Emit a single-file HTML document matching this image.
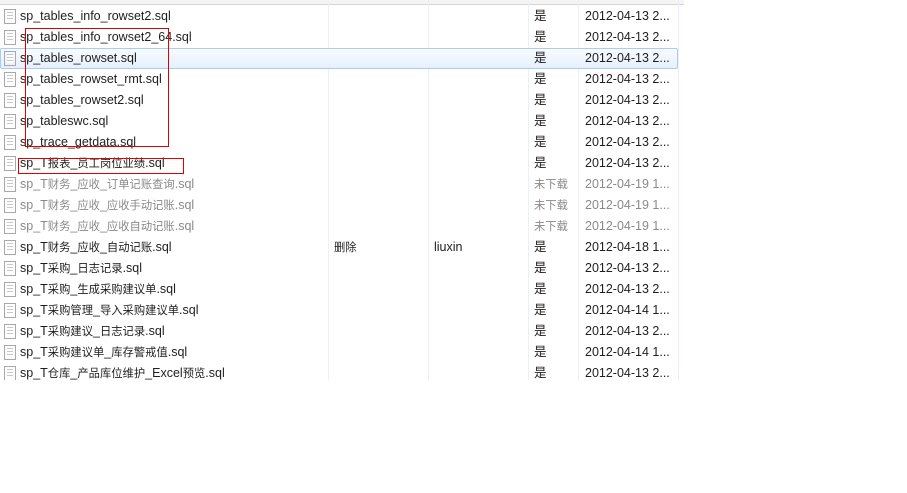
<!DOCTYPE html><html><head><meta charset="utf-8"><style>
body{margin:0;width:907px;height:493px;background:#fff;position:relative;overflow:hidden;font-family:"Liberation Sans","Noto Sans CJK SC",sans-serif;font-size:12.5px;color:#1e1e1e}
.wrap{position:absolute;left:0;top:0;width:684px;height:380px;overflow:hidden}
.hdr{position:absolute;left:0;top:0;width:684px;height:4px;border-bottom:1px solid #d5d5d5;background:#f4f4f4}
.vl{position:absolute;top:0;height:380px;width:1px;background:#eaf0f8}
.row{position:absolute;left:0;width:678px;height:21px;line-height:21px;white-space:nowrap}
.row span{position:absolute}
b{font-weight:normal;font-size:11.3px}
.g{color:#8a8a8a}
.ic{position:absolute;left:4px;top:3px;width:12px;height:15px;border:1px solid #a8a8a8;box-sizing:border-box;background:repeating-linear-gradient(#fff 0 2px,#c8c8c8 2px 3px);background-clip:content-box;padding:2px 2px}
.sel{background:linear-gradient(#f8fbff,#e6f0fc);border:1px solid #a8cdf3;box-sizing:border-box;border-radius:2px}
.red{position:absolute;border:1px solid #e00000}
</style></head><body>
<div class="wrap">
<div class="hdr"></div>
<div class="vl" style="left:328px"></div><div class="vl" style="left:428px"></div><div class="vl" style="left:528px"></div><div class="vl" style="left:578px"></div><div class="vl" style="left:678px"></div>
<div class="row" style="top:6px"><i class="ic"></i><span style="left:20px">sp_tables_info_rowset2.sql</span><span style="left:534px">是</span><span style="left:585px">2012-04-13 2...</span></div>
<div class="row" style="top:27px"><i class="ic"></i><span style="left:20px">sp_tables_info_rowset2_64.sql</span><span style="left:534px">是</span><span style="left:585px">2012-04-13 2...</span></div>
<div class="row sel" style="top:48px"><i class="ic" style="top:2px;left:3px"></i><span style="left:19px;top:-1px">sp_tables_rowset.sql</span><span style="left:533px;top:-1px">是</span><span style="left:584px;top:-1px">2012-04-13 2...</span></div>
<div class="row" style="top:69px"><i class="ic"></i><span style="left:20px">sp_tables_rowset_rmt.sql</span><span style="left:534px">是</span><span style="left:585px">2012-04-13 2...</span></div>
<div class="row" style="top:90px"><i class="ic"></i><span style="left:20px">sp_tables_rowset2.sql</span><span style="left:534px">是</span><span style="left:585px">2012-04-13 2...</span></div>
<div class="row" style="top:111px"><i class="ic"></i><span style="left:20px">sp_tableswc.sql</span><span style="left:534px">是</span><span style="left:585px">2012-04-13 2...</span></div>
<div class="row" style="top:132px"><i class="ic"></i><span style="left:20px">sp_trace_getdata.sql</span><span style="left:534px">是</span><span style="left:585px">2012-04-13 2...</span></div>
<div class="row" style="top:153px"><i class="ic"></i><span style="left:20px">sp_T<b>报表</b>_<b>员工岗位业绩</b>.sql</span><span style="left:534px">是</span><span style="left:585px">2012-04-13 2...</span></div>
<div class="row g" style="top:174px"><i class="ic"></i><span style="left:20px">sp_T<b>财务</b>_<b>应收</b>_<b>订单记账查询</b>.sql</span><span style="left:534px"><b>未下载</b></span><span style="left:585px">2012-04-19 1...</span></div>
<div class="row g" style="top:195px"><i class="ic"></i><span style="left:20px">sp_T<b>财务</b>_<b>应收</b>_<b>应收手动记账</b>.sql</span><span style="left:534px"><b>未下载</b></span><span style="left:585px">2012-04-19 1...</span></div>
<div class="row g" style="top:216px"><i class="ic"></i><span style="left:20px">sp_T<b>财务</b>_<b>应收</b>_<b>应收自动记账</b>.sql</span><span style="left:534px"><b>未下载</b></span><span style="left:585px">2012-04-19 1...</span></div>
<div class="row" style="top:237px"><i class="ic"></i><span style="left:20px">sp_T<b>财务</b>_<b>应收</b>_<b>自动记账</b>.sql</span><span style="left:334px"><b>删除</b></span><span style="left:434px">liuxin</span><span style="left:534px">是</span><span style="left:585px">2012-04-18 1...</span></div>
<div class="row" style="top:258px"><i class="ic"></i><span style="left:20px">sp_T<b>采购</b>_<b>日志记录</b>.sql</span><span style="left:534px">是</span><span style="left:585px">2012-04-13 2...</span></div>
<div class="row" style="top:279px"><i class="ic"></i><span style="left:20px">sp_T<b>采购</b>_<b>生成采购建议单</b>.sql</span><span style="left:534px">是</span><span style="left:585px">2012-04-13 2...</span></div>
<div class="row" style="top:300px"><i class="ic"></i><span style="left:20px">sp_T<b>采购管理</b>_<b>导入采购建议单</b>.sql</span><span style="left:534px">是</span><span style="left:585px">2012-04-14 1...</span></div>
<div class="row" style="top:321px"><i class="ic"></i><span style="left:20px">sp_T<b>采购建议</b>_<b>日志记录</b>.sql</span><span style="left:534px">是</span><span style="left:585px">2012-04-13 2...</span></div>
<div class="row" style="top:342px"><i class="ic"></i><span style="left:20px">sp_T<b>采购建议单</b>_<b>库存警戒值</b>.sql</span><span style="left:534px">是</span><span style="left:585px">2012-04-14 1...</span></div>
<div class="row" style="top:363px"><i class="ic"></i><span style="left:20px">sp_T<b>仓库</b>_<b>产品库位维护</b>_Excel<b>预览</b>.sql</span><span style="left:534px">是</span><span style="left:585px">2012-04-13 2...</span></div>
</div>
<div class="red" style="left:25px;top:28px;width:142px;height:117px"></div>
<div class="red" style="left:18px;top:158px;width:164px;height:14px"></div>
</body></html>
